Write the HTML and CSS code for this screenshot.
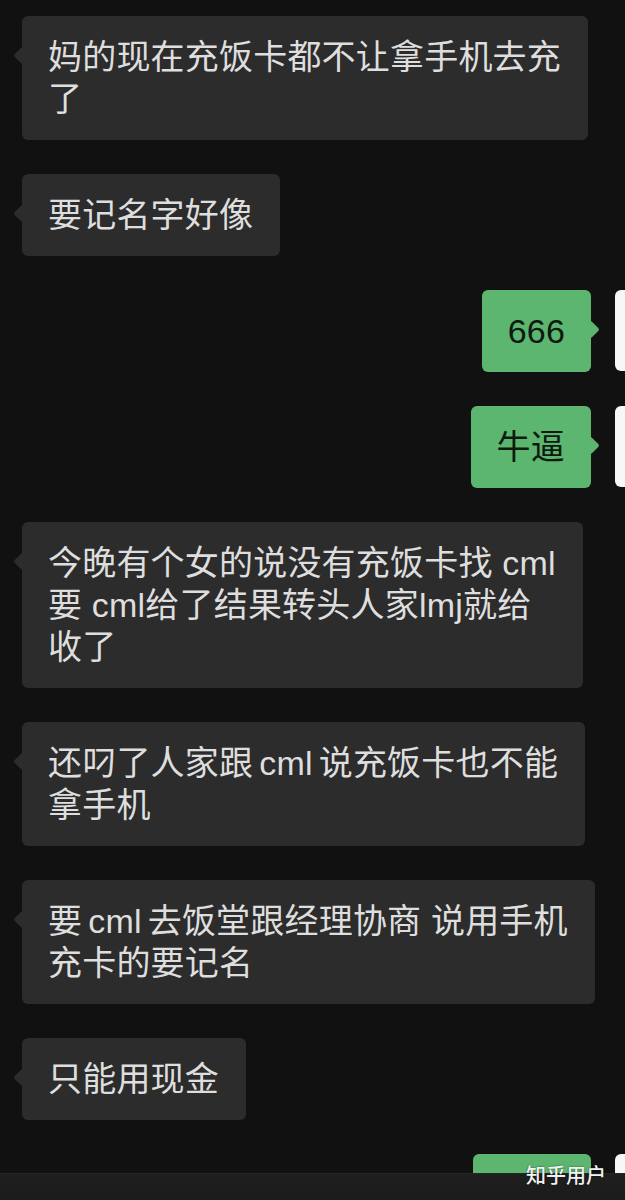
FILE: index.html
```html
<!DOCTYPE html>
<html lang="zh-CN">
<head>
<meta charset="utf-8">
<title>聊天</title>
<link rel="stylesheet" href="styles.css">
</head>
<body>
<div class="screen">
  <div class="chat">
    <div class="row in"><div class="bubble">妈的现在充饭卡都不让拿手机去充<br>了</div></div>
    <div class="row in"><div class="bubble">要记名字好像</div></div>
    <div class="row out"><div class="bubble green">666</div><div class="avatar"></div></div>
    <div class="row out"><div class="bubble green">牛逼</div><div class="avatar"></div></div>
    <div class="row in"><div class="bubble">今晚有个女的说没有充饭卡找 cml<br>要 cml给了结果转头人家lmj就给<br>收了</div></div>
    <div class="row in"><div class="bubble">还叼了人家跟<span class="en">cml</span>说充饭卡也不能<br>拿手机</div></div>
    <div class="row in"><div class="bubble">要<span class="en">cml</span>去饭堂跟经理协商 说用手机<br>充卡的要记名</div></div>
    <div class="row in"><div class="bubble">只能用现金</div></div>
    <div class="row out"><div class="bubble green stub"></div><div class="avatar"></div></div>
  </div>
  <div class="bar"></div>
  <div class="watermark">知乎用户</div>
</div>
</body>
</html>
```

FILE: styles.css
```css
* { box-sizing: border-box; }
html, body {
  margin: 0;
  padding: 0;
  background: #111111;
}
.screen {
  position: relative;
  width: 625px;
  height: 1200px;
  overflow: hidden;
  display: grid;
  grid-template-rows: 1173px 27px;
  font-family: "Liberation Sans", "Noto Sans CJK SC", sans-serif;
}
.chat {
  overflow: hidden;
  display: flex;
  flex-direction: column;
  gap: 34px;
  padding-top: 16px;
}
.row {
  display: flex;
  align-items: flex-start;
  flex-shrink: 0;
}
.row.in {
  padding-left: 22px;
}
.row.out {
  justify-content: flex-end;
  gap: 24px;
}
.bubble {
  position: relative;
  background: #2c2c2c;
  color: #dedede;
  font-size: 34px;
  line-height: 42px;
  padding: 20px 27px 20px 26px;
  border-radius: 6px;
  white-space: nowrap;
  letter-spacing: 0.2px;
}
.en {
  margin: 0 6px;
}
.bubble::before {
  content: "";
  position: absolute;
  top: 33px;
  left: -6px;
  width: 13px;
  height: 13px;
  background: inherit;
  border-radius: 2px;
  transform: rotate(45deg);
}
.bubble.green {
  background: #5db66f;
  color: #0c1a0f;
  padding: 20px 26px;
}
.bubble.green::before {
  left: auto;
  right: -6px;
}
.bubble.stub {
  width: 118px;
  height: 82px;
}
.avatar {
  flex-shrink: 0;
  width: 81px;
  height: 81px;
  margin-right: -71px;
  background: #f7f7f7;
  border-radius: 6px;
}
.bar {
  background: linear-gradient(#1f1f1f, #1b1b1b);
  border-top: 1px solid #262626;
}
.watermark {
  position: absolute;
  right: 19px;
  bottom: 12px;
  color: #f2f2f2;
  font-size: 20px;
  line-height: 24px;
  font-weight: 500;
  text-shadow: 0 0 2px rgba(0,0,0,0.6);
}
```
